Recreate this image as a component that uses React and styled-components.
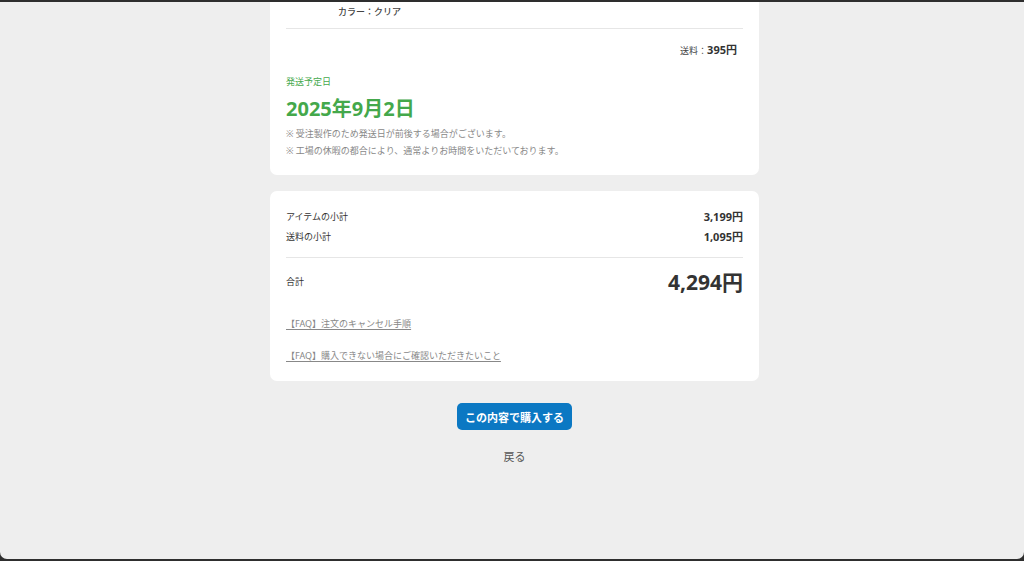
import styled, { createGlobalStyle } from "styled-components"

const GlobalStyle = createGlobalStyle`
  html, body {
    margin: 0;
    padding: 0;
    background: #2e2e2e;
    font-family: "Noto Sans", "Noto Sans CJK JP", sans-serif;
    color: #333;
  }
`

function App() {
  return (
    <>
      <GlobalStyle />
      <Page>
        <Column>
          <Card $cut>
            <Variant>カラー：クリア</Variant>
            <Divider />
            <ShippingFee>
              <small>送料：</small>
              <strong>395円</strong>
            </ShippingFee>
            <ShipLabel>発送予定日</ShipLabel>
            <ShipDate>2025年9月2日</ShipDate>
            <Note $first>※ 受注製作のため発送日が前後する場合がございます。</Note>
            <Note>※ 工場の休暇の都合により、通常よりお時間をいただいております。</Note>
          </Card>

          <Card>
            <SummaryRow>
              <span>アイテムの小計</span>
              <Amount>3,199円</Amount>
            </SummaryRow>
            <SummaryRow>
              <span>送料の小計</span>
              <Amount>1,095円</Amount>
            </SummaryRow>
            <Divider $gap />
            <TotalRow>
              <span>合計</span>
              <TotalAmount>4,294円</TotalAmount>
            </TotalRow>
            <FaqLink href="#" $top={20}>【FAQ】注文のキャンセル手順</FaqLink>
            <FaqLink href="#" $top={16}>【FAQ】購入できない場合にご確認いただきたいこと</FaqLink>
          </Card>

          <PurchaseButton type="button">この内容で購入する</PurchaseButton>
          <BackLink href="#">戻る</BackLink>
        </Column>
      </Page>
    </>
  )
}

const Page = styled.div`
  margin-top: 2px;
  height: 557px;
  background: #eeeeee;
  border-radius: 0 0 7px 7px;
  overflow: hidden;
  padding-left: 5px;
  box-sizing: border-box;
`

const Column = styled.div`
  width: 489px;
  margin: 0 auto;
  display: flex;
  flex-direction: column;
  align-items: center;
`

const Card = styled.section`
  align-self: stretch;
  background: #fff;
  border-radius: ${(p) => (p.$cut ? "0 0 7px 7px" : "7px")};
  padding: ${(p) => (p.$cut ? "0 16px 16px" : "16px 16px 17px")};
  margin-top: ${(p) => (p.$cut ? "0" : "16px")};
  display: flex;
  flex-direction: column;
`

const Variant = styled.div`
  padding-top: 1px;
  padding-left: 52px;
  font-size: 9px;
  line-height: 18px;
  color: #444;
  font-weight: 500;
`

const Divider = styled.hr`
  border: 0;
  border-top: 1px solid #e6e6e6;
  margin: ${(p) => (p.$gap ? "10px 0 0" : "7px 0 0")};
`

const ShippingFee = styled.div`
  margin-top: 11px;
  text-align: right;
  line-height: 16px;
  padding-right: 6px;

  small {
    font-size: 9px;
    color: #444;
  }

  strong {
    font-size: 11px;
    font-weight: 700;
    color: #333;
  }
`

const ShipLabel = styled.div`
  margin-top: 16px;
  font-size: 9px;
  line-height: 14px;
  color: #46a94d;
`

const ShipDate = styled.div`
  margin-top: 6px;
  font-size: 20px;
  line-height: 28px;
  font-weight: 700;
  color: #44a84b;
`

const Note = styled.p`
  margin: ${(p) => (p.$first ? "2px" : "0")} 0 0;
  font-size: 9px;
  line-height: 17px;
  color: #888;
`

const SummaryRow = styled.div`
  display: flex;
  justify-content: space-between;
  align-items: center;
  line-height: 20px;
  font-size: 9px;
  color: #333;
`

const Amount = styled.span`
  font-size: 11px;
  font-weight: 700;
`

const TotalRow = styled.div`
  margin-top: 10px;
  display: flex;
  justify-content: space-between;
  align-items: center;
  font-size: 9px;
  line-height: 28px;
`

const TotalAmount = styled.span`
  font-size: 21px;
  font-weight: 700;
  color: #333;
`

const FaqLink = styled.a`
  margin-top: ${(p) => p.$top}px;
  align-self: flex-start;
  font-size: 9px;
  line-height: 16px;
  color: #888;
  text-decoration: underline;
  text-underline-offset: 2px;
`

const PurchaseButton = styled.button`
  margin-top: 22px;
  height: 27px;
  padding: 0 8px;
  border: 0;
  border-radius: 5px;
  background: #0b78c3;
  color: #fff;
  font-family: inherit;
  font-size: 11px;
  font-weight: 700;
  cursor: pointer;
`

const BackLink = styled.a`
  margin-top: 19px;
  font-size: 11px;
  line-height: 16px;
  color: #555;
  text-decoration: none;
`

export default App
